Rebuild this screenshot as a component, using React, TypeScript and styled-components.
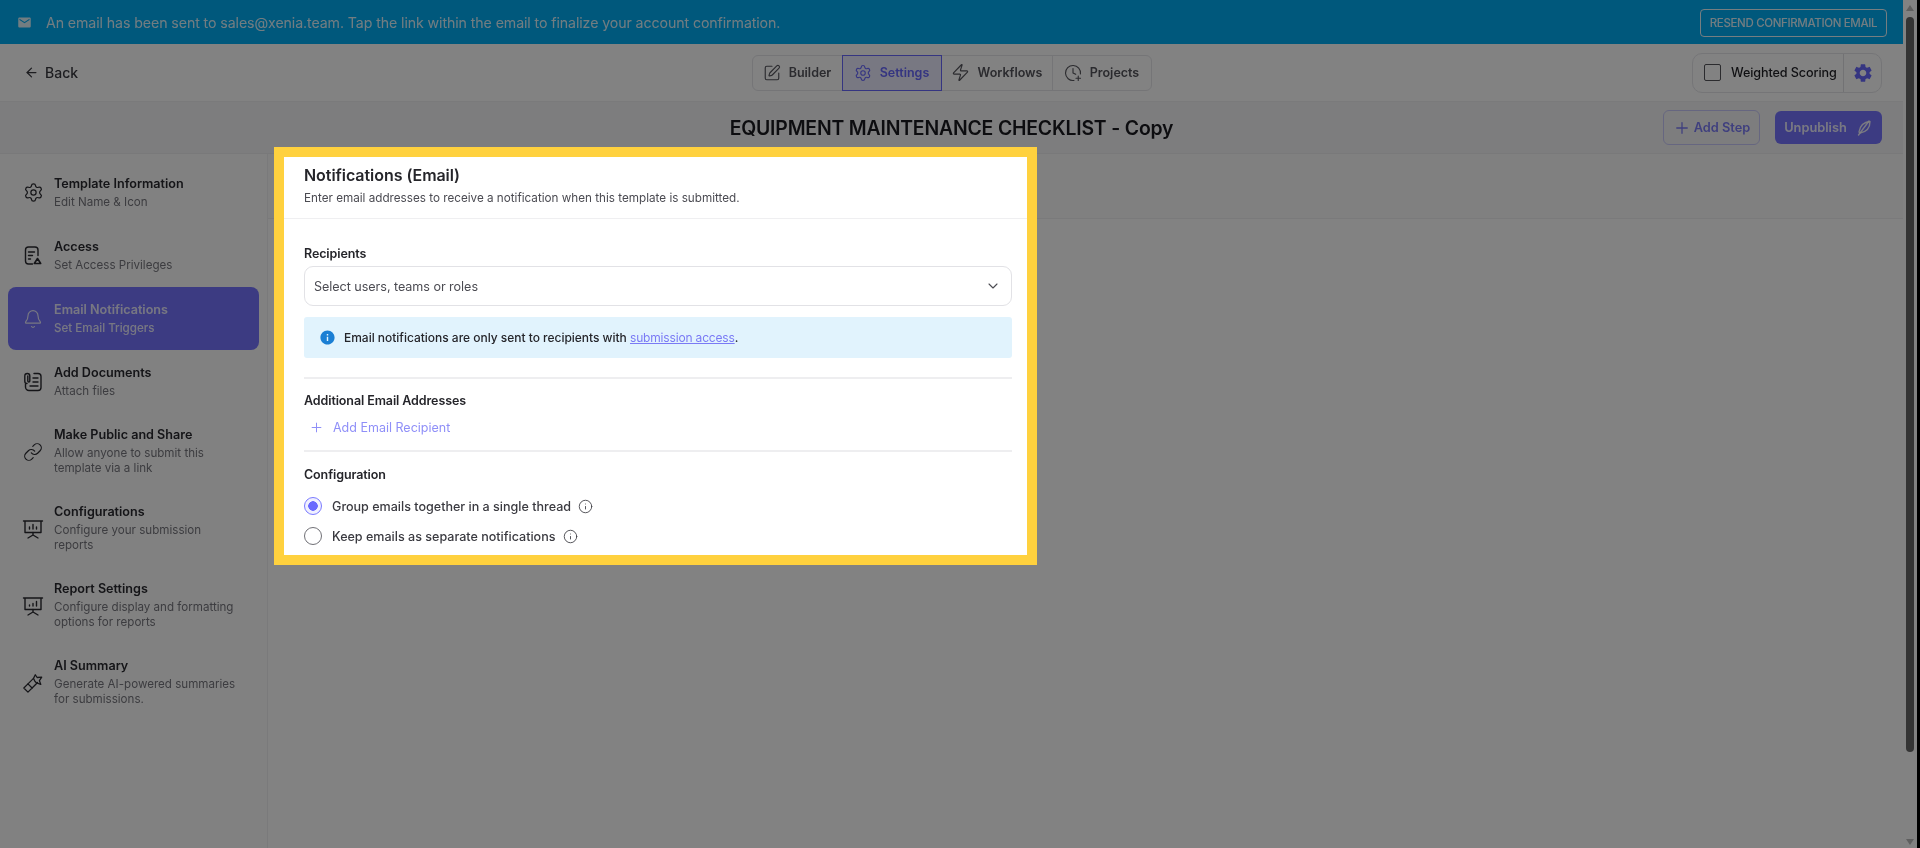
import React from 'react';
import styled, { createGlobalStyle } from 'styled-components';
import { ArrowLeft, Bell, ChevronDown, ClockPlus, Info, Link, Plus, Settings, SquarePen, Zap } from 'lucide-react';
import { MdEmail, MdInfo, MdSettings } from 'react-icons/md';

const GlobalStyle = createGlobalStyle`
  html, body { margin: 0; padding: 0; overflow: hidden; background: #808080; }
  * { box-sizing: border-box; }
  body { font-family: Inter, "Noto Sans", sans-serif; color: #1f1f24; }
`;

const Frame = styled.div`
  width: 1920px;
  height: 848px;
  overflow: hidden;
`;

// 4px of bleed all round so the soft edge of the blur falls outside the frame
const Screen = styled.div`
  position: relative;
  display: flex;
  width: 1928px;
  height: 856px;
  margin: -4px;
  padding: 4px;
  background:
    linear-gradient(#000, #000) right / 7px 100% no-repeat,
    linear-gradient(#00acf4 0 48px, #fff 48px);
  filter: blur(0.75px);
`;

const Page = styled.div`
  width: 1903px;
  display: flex;
  flex-direction: column;
  background: #fff;
`;

const Banner = styled.div`
  height: 44px;
  flex: none;
  display: flex;
  align-items: center;
  justify-content: space-between;
  padding: 0 16px 0 17px;
  background: #00acf4;
  color: rgba(255, 255, 255, 0.88);
`;

const BannerText = styled.div`
  display: flex;
  align-items: center;
  gap: 14px;
  font-size: 14.2px;
  letter-spacing: -0.1px;
`;

const ResendButton = styled.button`
  width: 187px;
  height: 28px;
  padding: 0;
  margin-top: 1px;
  background: transparent;
  border: 1px solid rgba(255, 255, 255, 0.9);
  border-radius: 4px;
  color: rgba(255, 255, 255, 0.88);
  font: 500 11.5px Inter, sans-serif;
  letter-spacing: -0.35px;
`;

const TopBar = styled.div`
  height: 58px;
  flex: none;
  display: grid;
  grid-template-columns: 1fr auto 1fr;
  align-items: center;
  padding: 0 21px;
  border-bottom: 1px solid #f0f0f2;
  background: #fff;
`;

const BackLink = styled.div`
  display: flex;
  align-items: center;
  gap: 6px;
  margin-left: 3px;
  font-size: 14px;
  font-weight: 500;
  color: #3a3a40;
`;

const Tabs = styled.div`
  display: flex;
  height: 36px;
  border: 1px solid #e6e6ea;
  border-radius: 6px;
`;

const Tab = styled.div<{ $active?: boolean; $width: number; $divider?: boolean }>`
  width: ${(p) => p.$width}px;
  display: flex;
  align-items: center;
  justify-content: center;
  gap: 8px;
  font-size: 12.5px;
  font-weight: 600;
  margin: ${(p) => (p.$active ? '-1px 0' : '0')};
  color: ${(p) => (p.$active ? '#6868fe' : '#55555c')};
  background: ${(p) => (p.$active ? '#ebebff' : 'transparent')};
  border: ${(p) => (p.$active ? '1px solid #6868fe' : 'none')};
  border-right: ${(p) => (p.$divider ? '1px solid #e6e6ea' : undefined)};
`;

const RightTools = styled.div`
  justify-self: end;
  display: flex;
  height: 40px;
  width: 190px;
  border: 1px solid #e6e6ea;
  border-radius: 10px;
`;

const ScoringToggle = styled.div`
  flex: 1;
  display: flex;
  align-items: center;
  gap: 10px;
  padding-left: 11px;
  font-size: 12.6px;
  font-weight: 500;
  letter-spacing: -0.1px;
  border-right: 1px solid #e0e0e4;
`;

const CheckBox = styled.span`
  width: 17px;
  height: 17px;
  border: 1.5px solid #55555a;
  border-radius: 2px;
`;

const GearCell = styled.div`
  width: 37px;
  display: flex;
  align-items: center;
  justify-content: center;
  color: #6868fe;
`;

const TitleBar = styled.div`
  height: 52px;
  flex: none;
  display: grid;
  grid-template-columns: 1fr auto 1fr;
  align-items: center;
  padding: 0 21px;
  background: #f6f6f8;
  border-bottom: 1px solid #eeeef0;
`;

const Title = styled.h1`
  grid-column: 2;
  margin: 0;
  font-size: 19.4px;
  font-weight: 600;
  letter-spacing: -0.17px;
  color: #1b1b20;
`;

const TitleActions = styled.div`
  justify-self: end;
  display: flex;
  align-items: center;
  gap: 15px;
`;

const AddStep = styled.button`
  width: 97px;
  height: 35px;
  display: flex;
  align-items: center;
  justify-content: center;
  gap: 3px;
  padding: 0;
  background: transparent;
  border: 1px solid #c9c9fb;
  border-radius: 6px;
  color: #7c7cf8;
  font: 600 12.8px Inter, sans-serif;
`;

const Unpublish = styled.button`
  width: 107px;
  height: 33px;
  display: flex;
  align-items: center;
  justify-content: center;
  gap: 8px;
  padding: 0;
  background: #7674ff;
  border: none;
  border-radius: 6px;
  color: rgba(255, 255, 255, 0.88);
  font: 600 12.8px Inter, sans-serif;
`;

const Body = styled.div`
  flex: 1;
  display: flex;
  min-height: 0;
`;

const Sidebar = styled.nav`
  width: 268px;
  flex: none;
  padding: 7px 8px 0;
  background: #fdfdfd;
  border-right: 1px solid #f0f0f2;
`;

const SideItem = styled.div<{ $active?: boolean; $tall?: boolean }>`
  height: ${(p) => (p.$tall ? 77 : 63)}px;
  width: 251px;
  display: flex;
  align-items: center;
  gap: 10px;
  padding-left: 14px;
  border-radius: 8px;
  background: ${(p) => (p.$active ? '#7674ff' : 'transparent')};
  color: ${(p) => (p.$active ? 'rgba(255, 255, 255, 0.85)' : '#2a2a30')};
`;

const SideIcon = styled.span`
  width: 22px;
  flex: none;
  display: flex;
  align-items: center;
  justify-content: center;
`;

const SideText = styled.div`
  display: flex;
  flex-direction: column;
  gap: 3px;
`;

const SideTitle = styled.div`
  font-size: 12.6px;
  line-height: 16px;
  font-weight: 600;
`;

const SideSub = styled.div<{ $active?: boolean }>`
  font-size: 11.6px;
  line-height: 15px;
  width: 185px;
  font-weight: ${(p) => (p.$active ? 500 : 400)};
  color: ${(p) => (p.$active ? 'rgba(255, 255, 255, 0.85)' : '#77777e')};
`;

const Main = styled.main`
  flex: 1;
  background: #fff;
`;

const MainHead = styled.div`
  height: 65px;
  background: #fbfbfb;
  border-bottom: 1px solid #f0f0f2;
`;

const ScrollTrack = styled.div`
  width: 14px;
  flex: none;
  display: flex;
  flex-direction: column;
  align-items: center;
  padding: 5px 1px 3px 0;
  background: #fff;
`;

const ScrollThumb = styled.div`
  width: 8px;
  height: 735px;
  margin: 6px 0 auto;
  border-radius: 4px;
  background: #666;
`;

const ArrowUp = styled.span`
  width: 0;
  height: 0;
  border: 4px solid transparent;
  border-top: 0;
  border-bottom: 6px solid #bbb;
`;

const ArrowDown = styled(ArrowUp)`
  border-top: 6px solid #bbb;
  border-bottom: 0;
`;

const ScreenEdge = styled.div`
  width: 3px;
  flex: none;
  background: #000;
`;

const Dim = styled.div`
  position: absolute;
  inset: 0;
  background: rgba(0, 0, 0, 0.49);
`;

const Modal = styled.section`
  position: absolute;
  left: 278px;
  top: 151px;
  width: 763px;
  height: 418px;
  border: 10px solid #ffd13e;
  background: #fff;
`;

const ModalHead = styled.header`
  height: 62px;
  padding: 8px 20px 0;
  border-bottom: 1px solid #efeff1;
`;

const ModalTitle = styled.h2`
  margin: 0;
  font-size: 16px;
  line-height: 21px;
  font-weight: 600;
  letter-spacing: -0.05px;
  color: #25252a;
`;

const ModalSub = styled.p`
  margin: 5px 0 0;
  font-size: 11.7px;
  line-height: 15px;
  color: #4b4b52;
`;

const ModalBody = styled.div`
  padding: 0 15px 0 20px;
`;

const Label = styled.div<{ $top: number }>`
  margin-top: ${(p) => p.$top}px;
  font-size: 12.5px;
  line-height: 16px;
  font-weight: 600;
  letter-spacing: -0.1px;
  color: #25252a;
`;

const SelectBox = styled.div`
  height: 40px;
  margin-top: 4px;
  display: flex;
  align-items: center;
  justify-content: space-between;
  padding: 0 10px 0 9px;
  border: 1px solid #e2e2e6;
  border-radius: 9px;
  font-size: 12.6px;
  letter-spacing: -0.05px;
  color: #4b4b52;
`;

const Notice = styled.div`
  height: 41px;
  margin-top: 11px;
  display: flex;
  align-items: center;
  gap: 8px;
  padding-left: 15px;
  border-radius: 3px;
  background: #e1f3fd;
  font-size: 12px;
  font-weight: 500;
  letter-spacing: -0.02px;
  color: #25252a;
`;

const NoticeLink = styled.a`
  color: #7a7af5;
  text-decoration: underline;
  font-weight: 400;
  letter-spacing: -0.17px;
`;

const Rule = styled.hr<{ $top: number }>`
  height: 2px;
  margin: ${(p) => p.$top}px 0 0;
  border: none;
  background: #eeeef0;
`;

const AddRecipient = styled.div`
  height: 20px;
  margin-top: 8px;
  display: flex;
  align-items: center;
  gap: 9px;
  padding-left: 5px;
  font-size: 12.5px;
  color: #8f8ff8;
`;

const RadioRow = styled.div<{ $top: number }>`
  height: 20px;
  margin-top: ${(p) => p.$top}px;
  display: flex;
  align-items: center;
  gap: 6px;
  font-size: 12.55px;
  font-weight: 500;
  color: #3a3a40;
  svg { color: #3f3f45; margin-left: 1px; }
`;

const Radio = styled.span<{ $on?: boolean }>`
  width: 18px;
  height: 18px;
  flex: none;
  margin-right: 4px;
  border-radius: 50%;
  border: ${(p) => (p.$on ? '1.5px solid #7a7aff' : '1.5px solid #707076')};
  background: ${(p) => (p.$on ? 'radial-gradient(circle, #6868fe 0 4.5px, #f0f0ff 5px)' : '#fff')};
`;

const iconProps = { fill: 'none', stroke: 'currentColor', strokeWidth: 1.4, strokeLinecap: 'round', strokeLinejoin: 'round' } as const;

const AccessIcon = () => (
  <svg width="22" height="22" viewBox="0 0 22 22" {...iconProps}>
    <path d="M10.500 19H6.500a3 3 0 0 1-3-3V5a3 3 0 0 1 3-3h6.500a3 3 0 0 1 3 3v5.500" />
    <path d="M6.500 7h6M6.500 10.500h4M6.500 14h2" />
    <path d="M15.500 13.500l3.200 5h-6.400z" strokeWidth={1.6} />
  </svg>
);

const DocsIcon = () => (
  <svg width="22" height="22" viewBox="0 0 22 22" {...iconProps}>
    <path d="M12 2.500h4a3 3 0 0 1 3 3v11a3 3 0 0 1-3 3H7a3.500 3.500 0 0 1-3.500-3.500v-3" />
    <path d="M5 12.500a2.200 2.200 0 0 1-2.200-2.200V5a2.500 2.500 0 0 1 5 0v5a1 1 0 0 1-2 0V5" />
    <path d="M11 7h5M11 11h5M8 15h8" />
  </svg>
);

const BoardIcon = ({ rising }: { rising?: boolean }) => (
  <svg width="22" height="22" viewBox="0 0 22 22" {...iconProps}>
    <path d="M1.500 3h19M3 3v11.500h16V3" />
    <path d="M11 14.500V17M6 20l5-3 5 3" />
    {rising ? <path d="M7.500 11v-1M11 11V8.500M14.500 11V6.500" /> : <path d="M7.500 11V9M11 11V6.500M14.500 11V9" />}
  </svg>
);

const WandIcon = () => (
  <svg width="24" height="24" viewBox="0 0 24 24" {...iconProps}>
    <path d="M2 17.500l4.500-4.500 4.500 4.500L6.500 22z" />
    <path d="M6.500 13l6-6M11 17.500l6-6" />
    <path d="M12.500 7l2-4 2 3 5-.5-2.500 4 1.500 4-4.500-1.500-1.800-1.700z" />
  </svg>
);

const PenSlashIcon = () => (
  <svg width="18" height="18" viewBox="0 0 18 18" {...iconProps}>
    <path d="M15 2.500C9 3 5 7 4 13l1 1c6-1 10-5 10-11.500z" />
    <path d="M3.500 16L14 2" />
  </svg>
);

const sideItems = [
  { icon: <Settings size={21} strokeWidth={1.4} />, title: 'Template Information', sub: 'Edit Name & Icon' },
  { icon: <AccessIcon />, title: 'Access', sub: 'Set Access Privileges' },
  { icon: <Bell size={20} strokeWidth={1.4} />, title: 'Email Notifications', sub: 'Set Email Triggers', active: true },
  { icon: <DocsIcon />, title: 'Add Documents', sub: 'Attach files' },
  { icon: <Link size={20} strokeWidth={1.4} />, title: 'Make Public and Share', sub: 'Allow anyone to submit this template via a link', tall: true },
  { icon: <BoardIcon />, title: 'Configurations', sub: 'Configure your submission reports', tall: true },
  { icon: <BoardIcon rising />, title: 'Report Settings', sub: 'Configure display and formatting options for reports', tall: true },
  { icon: <WandIcon />, title: 'AI Summary', sub: 'Generate AI-powered summaries for submissions.', tall: true },
];

export default function App() {
  return (
    <Frame>
      <GlobalStyle />
      <Screen>
        <Page>
          <Banner>
            <BannerText>
              <MdEmail size={15} />
              An email has been sent to sales@xenia.team. Tap the link within the email to finalize your account confirmation.
            </BannerText>
            <ResendButton>RESEND CONFIRMATION EMAIL</ResendButton>
          </Banner>
          <TopBar>
            <BackLink>
              <ArrowLeft size={15} />
              Back
            </BackLink>
            <Tabs>
              <Tab $width={89}>
                <SquarePen size={18} strokeWidth={1.5} />
                Builder
              </Tab>
              <Tab $width={100} $active>
                <Settings size={18} strokeWidth={1.5} />
                Settings
              </Tab>
              <Tab $width={111} $divider>
                <Zap size={19} strokeWidth={1.5} />
                Workflows
              </Tab>
              <Tab $width={98}>
                <ClockPlus size={18} strokeWidth={1.5} />
                Projects
              </Tab>
            </Tabs>
            <RightTools>
              <ScoringToggle>
                <CheckBox />
                Weighted Scoring
              </ScoringToggle>
              <GearCell>
                <MdSettings size={22} />
              </GearCell>
            </RightTools>
          </TopBar>
          <TitleBar>
            <Title>EQUIPMENT MAINTENANCE CHECKLIST - Copy</Title>
            <TitleActions>
              <AddStep>
                <Plus size={18} strokeWidth={1.7} />
                Add Step
              </AddStep>
              <Unpublish>
                Unpublish
                <PenSlashIcon />
              </Unpublish>
            </TitleActions>
          </TitleBar>
          <Body>
            <Sidebar>
              {sideItems.map((item) => (
                <SideItem key={item.title} $active={item.active} $tall={item.tall}>
                  <SideIcon>{item.icon}</SideIcon>
                  <SideText>
                    <SideTitle>{item.title}</SideTitle>
                    <SideSub $active={item.active}>{item.sub}</SideSub>
                  </SideText>
                </SideItem>
              ))}
            </Sidebar>
            <Main>
              <MainHead />
            </Main>
          </Body>
        </Page>
        <ScrollTrack>
          <ArrowUp />
          <ScrollThumb />
          <ArrowDown />
        </ScrollTrack>
        <ScreenEdge />
        <Dim />
        <Modal>
          <ModalHead>
            <ModalTitle>Notifications (Email)</ModalTitle>
            <ModalSub>Enter email addresses to receive a notification when this template is submitted.</ModalSub>
          </ModalHead>
          <ModalBody>
            <Label $top={27}>Recipients</Label>
            <SelectBox>
              Select users, teams or roles
              <ChevronDown size={16} strokeWidth={1.6} />
            </SelectBox>
            <Notice>
              <MdInfo size={17} color="#1b7fd4" />
              <span>
                Email notifications are only sent to recipients with <NoticeLink>submission access</NoticeLink>.
              </span>
            </Notice>
            <Rule $top={19} />
            <Label $top={14}>Additional Email Addresses</Label>
            <AddRecipient>
              <Plus size={15} strokeWidth={1.6} />
              Add Email Recipient
            </AddRecipient>
            <Rule $top={13} />
            <Label $top={15}>Configuration</Label>
            <RadioRow $top={13}>
              <Radio $on />
              Group emails together in a single thread
              <Info size={15} strokeWidth={1.4} />
            </RadioRow>
            <RadioRow $top={10}>
              <Radio />
              Keep emails as separate notifications
              <Info size={15} strokeWidth={1.4} />
            </RadioRow>
          </ModalBody>
        </Modal>
      </Screen>
    </Frame>
  );
}
